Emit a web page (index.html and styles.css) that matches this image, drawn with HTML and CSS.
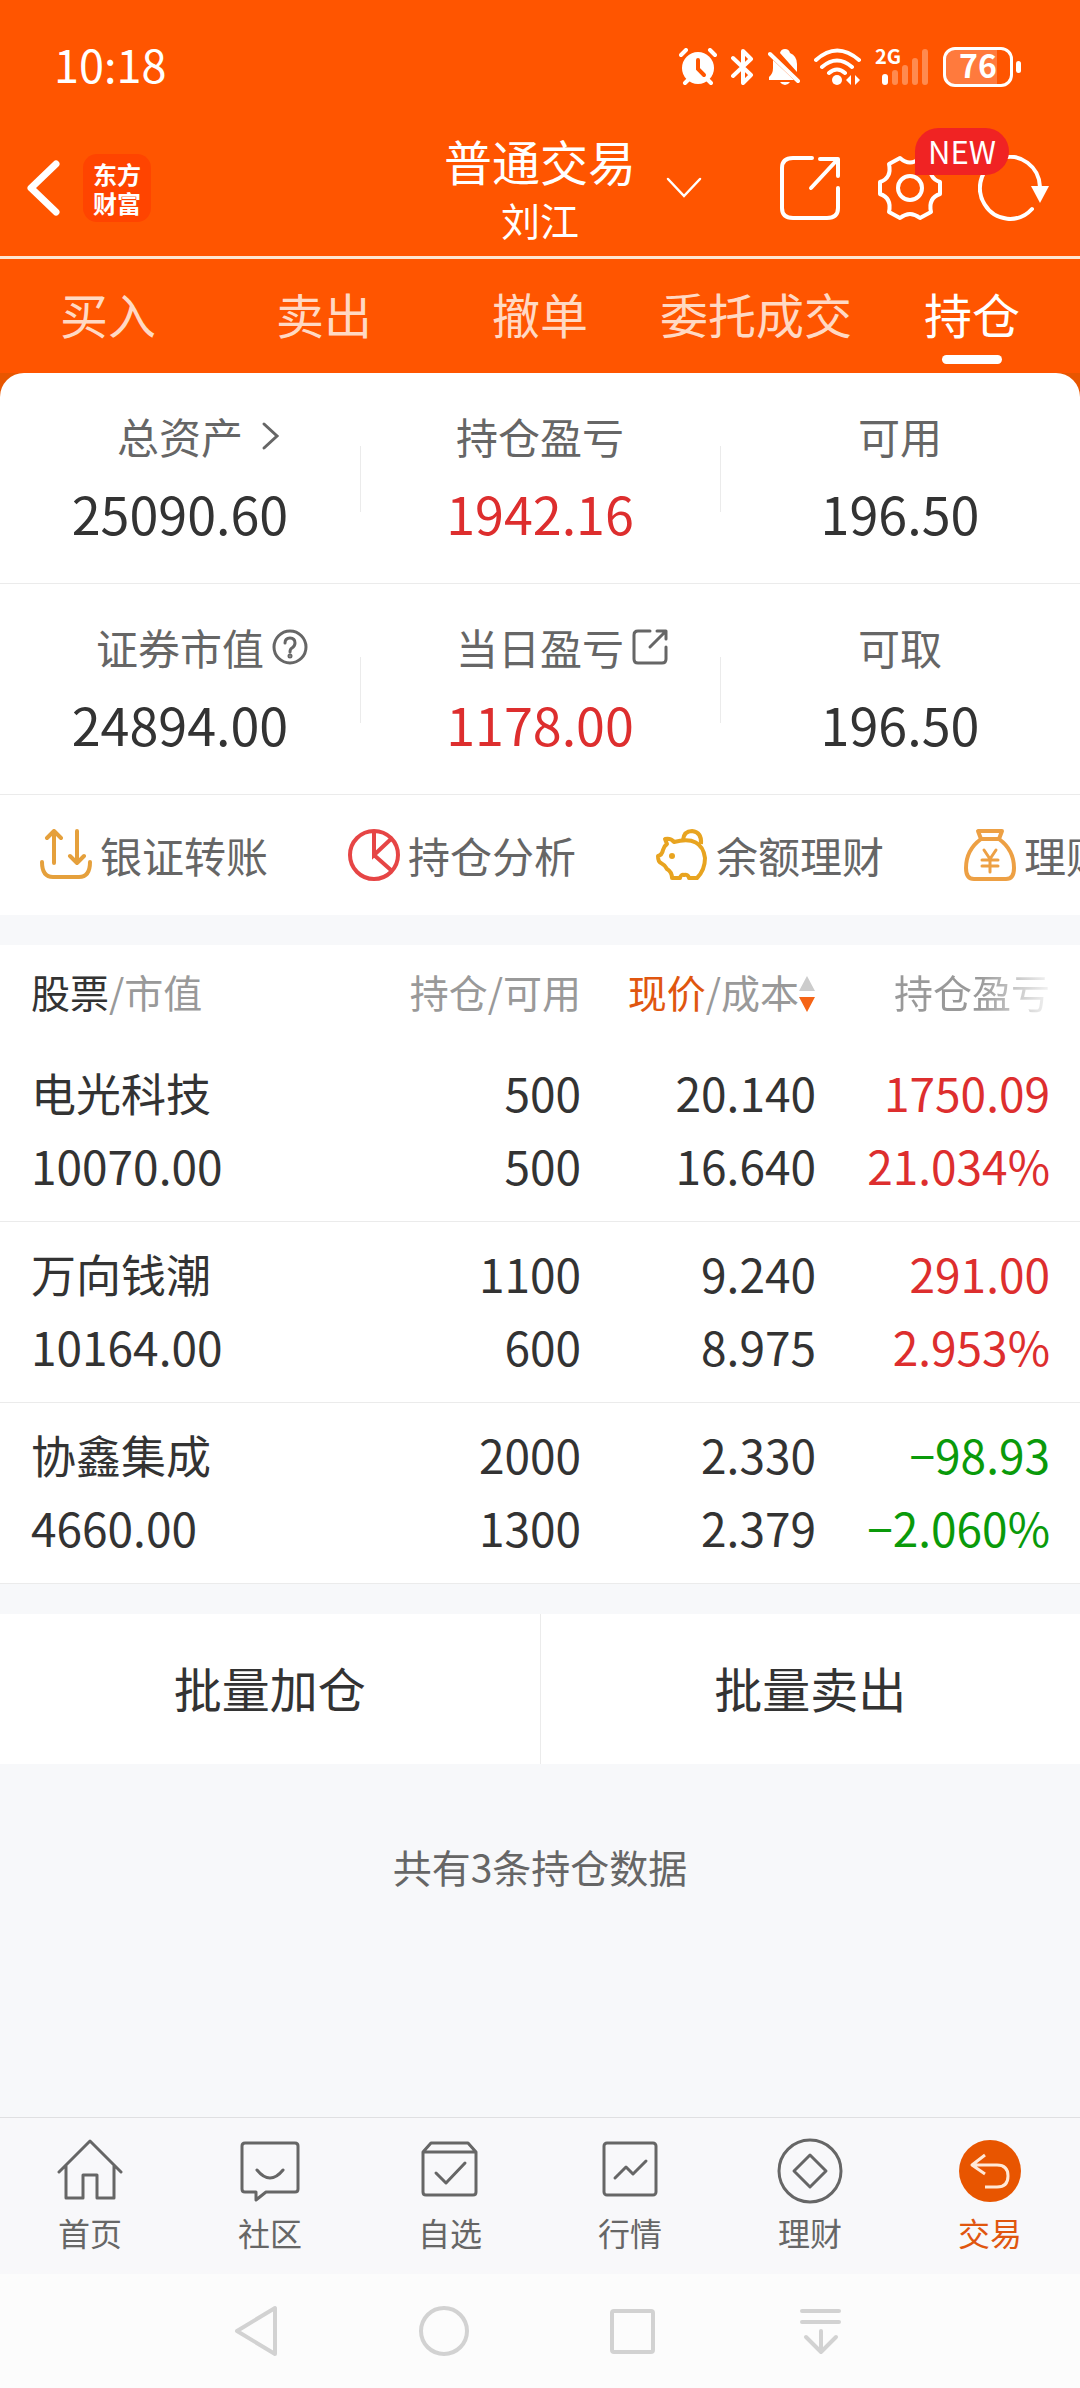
FILE: index.html
```html
<!DOCTYPE html>
<html lang="zh-CN">
<head>
  <meta charset="UTF-8">
  <meta name="viewport" content="width=device-width, initial-scale=1.0">
  <title>普通交易 - 持仓</title>
  <link rel="stylesheet" href="styles.css">
</head>
<body>
  <header class="top">
    <div class="status">
      <span class="time">10:18</span>
      <div class="status-icons">
        <svg width="38" height="38" viewBox="0 0 38 38" fill="none" stroke="#fff" stroke-width="4" stroke-linecap="round">
          <circle cx="19" cy="20" r="16" fill="#fff" stroke="none"/>
          <path d="M2 7l5-5M36 7l-5-5M6 35l4-4M32 35l-4-4"/>
          <path d="M19 12v9l6 6" stroke="#ff5500" stroke-width="4"/>
        </svg>
        <svg width="23" height="38" viewBox="0 0 23 38" fill="none" stroke="#fff" stroke-width="4" stroke-linejoin="round" stroke-linecap="round">
          <path d="M2 10l18 17-8 8V3l8 8L2 28"/>
        </svg>
        <svg width="32" height="38" viewBox="0 0 32 38" fill="#fff">
          <path d="M12 5q1-4 5-4t5 4q7 3 7 11v8zM5 12l21 20H1v-3q4-3 4-9zM12 34h10q-2 3-5 3t-5-3z"/>
          <path d="M2 6l28 27" stroke="#fff" stroke-width="4" stroke-linecap="round"/>
          <path d="M7 5l24 23" stroke="#ff5500" stroke-width="2"/>
        </svg>
        <svg width="47" height="38" viewBox="0 0 47 38" fill="none" stroke="#fff" stroke-width="4" stroke-linecap="round">
          <path d="M2 12q21-19 43 0M8 19q15-13 30 0M15 25q8-7 16 0"/>
          <circle cx="23" cy="32" r="5" fill="#fff" stroke="none"/>
          <path d="M37 27v10l-5-5zM41 27v10l5-5z" fill="#fff" stroke="none"/>
        </svg>
        <div class="signal">
          <span>2G</span>
          <svg width="54" height="38" viewBox="0 0 54 38" stroke-width="6" stroke-linecap="round">
            <path d="M10 29v5" stroke="#fff"/>
            <path d="M20 25v9M30 20v14M40 13v21M50 4v30" stroke="#ff8a4f"/>
          </svg>
        </div>
        <div class="battery"><span>76</span></div>
      </div>
    </div>

    <div class="bar">
      <div class="bar-left">
        <button class="icon-btn" aria-label="返回">
          <svg width="36" height="60" viewBox="0 0 36 60" fill="none" stroke="#fff" stroke-width="7" stroke-linecap="round" stroke-linejoin="round">
            <path d="M31 6L6 30l25 24"/>
          </svg>
        </button>
        <div class="logo">
          <span>东方</span>
          <span>财富</span>
        </div>
      </div>
      <div class="title">
        <h1>普通交易</h1>
        <p>刘江</p>
      </div>
      <div class="bar-right">
        <button class="icon-btn chevron" aria-label="切换账户">
          <svg width="36" height="22" viewBox="0 0 36 22" fill="none" stroke="#fff" stroke-width="2.5" stroke-linecap="round">
            <path d="M2 2l16 17L34 2"/>
          </svg>
        </button>
        <button class="icon-btn" aria-label="分享">
          <svg width="64" height="66" viewBox="0 0 64 66" fill="none" stroke="#fff" stroke-width="4" stroke-linecap="round" stroke-linejoin="round">
            <path d="M34 3H15Q4 3 4 13v40q0 10 11 10h34q11 0 11-10V33M42 4h18v17M59 5L33 33"/>
          </svg>
        </button>
        <button class="icon-btn" aria-label="设置">
          <svg width="64" height="66" viewBox="0 0 64 66" fill="none" stroke="#fff" stroke-width="4" stroke-linejoin="round">
            <path d="M22 3Q32 12 42 3L53 9Q50 23 62 27V39Q50 43 53 57L42 63Q32 55 22 63L11 57Q14 43 2 39V27Q14 23 11 9Z"/>
            <circle cx="32" cy="33" r="12"/>
          </svg>
          <span class="badge">NEW</span>
        </button>
        <button class="icon-btn" aria-label="刷新">
          <svg width="72" height="66" viewBox="0 0 72 66" fill="none" stroke="#fff" stroke-width="4" stroke-linecap="round">
            <path d="M54 54A30 31 0 1 1 62 32"/>
            <path d="M53 31h18l-9 17z" fill="#fff" stroke="none"/>
          </svg>
        </button>
      </div>
    </div>

    <nav class="tabs">
      <a href="#">买入</a>
      <a href="#">卖出</a>
      <a href="#">撤单</a>
      <a href="#">委托成交</a>
      <a href="#" class="active">持仓</a>
    </nav>
  </header>

  <main>
    <div class="panel-wrap">
    <section class="panel">
      <div class="summary">
        <div class="stat">
          <span class="label">总资产
            <svg class="hang" width="36" height="36" viewBox="0 0 36 36" fill="none" stroke="#666" stroke-width="3" stroke-linecap="round"><path d="M13 6l13 12-13 12"/></svg>
          </span>
          <span class="value">25090.60</span>
        </div>
        <div class="stat">
          <span class="label">持仓盈亏</span>
          <span class="value red">1942.16</span>
        </div>
        <div class="stat">
          <span class="label">可用</span>
          <span class="value">196.50</span>
        </div>
      </div>
      <div class="summary">
        <div class="stat">
          <span class="label">证券市值
            <svg class="hang" width="36" height="36" viewBox="0 0 36 36" fill="none" stroke="#666" stroke-width="3" stroke-linecap="round">
              <circle cx="18" cy="18" r="16"/><path d="M13 14q0-5 5-5t5 5q0 3-3 5-2 1-2 4"/><circle cx="18" cy="27" r="1"/>
            </svg>
          </span>
          <span class="value">24894.00</span>
        </div>
        <div class="stat">
          <span class="label">当日盈亏
            <svg class="hang" width="36" height="36" viewBox="0 0 36 36" fill="none" stroke="#666" stroke-width="3" stroke-linecap="round" stroke-linejoin="round">
              <path d="M18 2H6Q2 2 2 6v24q0 4 4 4h24q4 0 4-4V18M25 2h9v8M33 3L18 18"/>
            </svg>
          </span>
          <span class="value red">1178.00</span>
        </div>
        <div class="stat">
          <span class="label">可取</span>
          <span class="value">196.50</span>
        </div>
      </div>
      <div class="actions">
        <a href="#">
          <svg width="52" height="52" viewBox="0 0 52 52" fill="none" stroke="#e5a03c" stroke-width="4" stroke-linecap="round" stroke-linejoin="round">
            <path d="M14 34V3M7 9l7-7 7 7M37 2v32M30 27l7 7 7-7"/>
            <path d="M2 33q0 15 11 15h26q11 0 11-15"/>
          </svg>
          银证转账
        </a>
        <a href="#">
          <svg width="52" height="52" viewBox="0 0 52 52" fill="none" stroke="#e64545" stroke-width="4">
            <circle cx="26" cy="26" r="24"/><path d="M26 2v24l17-16M26 26l18 16"/>
          </svg>
          持仓分析
        </a>
        <a href="#">
          <svg width="52" height="52" viewBox="0 0 52 52" fill="none" stroke="#e8a420" stroke-width="4" stroke-linejoin="round">
            <path d="M9 10q6-1 9 3 28-7 31 16 0 12-8 20h-8q-1-4-5-3-3-1-4 3h-8q0-6-5-9-2-4-6-6-3-1-3-7 4-1 5-6 1-4 4-6z"/>
            <path d="M27 11q1-9 9-9 10 1 9 13"/><circle cx="16" cy="27" r="3" fill="#e8a420" stroke="none"/>
          </svg>
          余额理财
        </a>
        <a href="#">
          <svg width="52" height="52" viewBox="0 0 52 52" fill="none" stroke="#eda044" stroke-width="4" stroke-linecap="round" stroke-linejoin="round">
            <path d="M14 2h24l-3 8q15 11 15 29 0 11-8 11H10q-8 0-8-11 0-18 15-29zM17 10h18"/>
            <path d="M20 21l6 9 6-9M18 31h16M18 37h16M26 30v13" stroke-width="3"/>
          </svg>
          理财产品
        </a>
      </div>
    </section>
    </div>

    <table class="holdings">
      <thead>
        <tr>
          <th class="name"><b>股票</b>/市值</th>
          <th class="qty">持仓/可用</th>
          <th class="price"><em>现价</em>/成本<svg width="17" height="36" viewBox="0 0 17 36"><path d="M8 0l8 15H0z" fill="#ccc"/><path d="M8 36l8-15H0z" fill="#f56416"/></svg></th>
          <th class="profit"><span class="fade">持仓盈亏</span></th>
        </tr>
      </thead>
      <tbody>
        <tr>
          <td><span class="stock">电光科技</span>10070.00</td>
          <td>500<br>500</td>
          <td>20.140<br>16.640</td>
          <td class="red">1750.09<br>21.034%</td>
        </tr>
        <tr>
          <td><span class="stock">万向钱潮</span>10164.00</td>
          <td>1100<br>600</td>
          <td>9.240<br>8.975</td>
          <td class="red">291.00<br>2.953%</td>
        </tr>
        <tr>
          <td><span class="stock">协鑫集成</span>4660.00</td>
          <td>2000<br>1300</td>
          <td>2.330<br>2.379</td>
          <td class="green">−98.93<br>−2.060%</td>
        </tr>
      </tbody>
    </table>

    <div class="batch">
      <button>批量加仓</button>
      <button>批量卖出</button>
    </div>

    <p class="total">共有3条持仓数据</p>
  </main>

  <footer>
    <nav class="bottom-nav">
      <a href="#">
        <svg width="66" height="66" viewBox="0 0 66 66">
          <path d="M2 34L33 3l31 31M9 28v32h17V37h14v23h17V28"/>
        </svg>
        首页
      </a>
      <a href="#">
        <svg width="66" height="66" viewBox="0 0 66 66">
          <path d="M8 5h50q3 0 3 3v43q0 3-3 3H29l-10 8v-8H8q-3 0-3-3V8q0-3 3-3zM20 32q13 16 26 0"/>
        </svg>
        社区
      </a>
      <a href="#">
        <svg width="66" height="66" viewBox="0 0 66 66">
          <path d="M6 14l8-9h37l8 9v40q0 3-3 3H9q-3 0-3-3zM6 14h53M19 35l10 10 19-20"/>
        </svg>
        自选
      </a>
      <a href="#">
        <svg width="66" height="66" viewBox="0 0 66 66">
          <rect x="7" y="5" width="52" height="52" rx="3"/><path d="M18 40l11-11 7 7 13-13"/>
        </svg>
        行情
      </a>
      <a href="#">
        <svg width="66" height="66" viewBox="0 0 66 66">
          <circle cx="33" cy="33" r="31"/><path d="M33 17l16 16-16 16-16-16z"/>
        </svg>
        理财
      </a>
      <a href="#" class="active">
        <svg width="66" height="66" viewBox="0 0 66 66">
          <circle cx="33" cy="33" r="31" fill="#e85500" stroke="none"/>
          <path d="M28 17L15 27l13 9M16 27h24q11 0 11 11t-11 11H28" stroke="#ffe8d6" stroke-linecap="butt"/>
        </svg>
        交易
      </a>
    </nav>
    <div class="sys-nav">
      <button aria-label="返回"><svg width="54" height="54" viewBox="0 0 54 54"><path d="M44 4v46L6 27z"/></svg></button>
      <button aria-label="主页"><svg width="54" height="54" viewBox="0 0 54 54"><circle cx="25" cy="27" r="23"/></svg></button>
      <button aria-label="最近任务"><svg width="54" height="54" viewBox="0 0 54 54"><rect x="5" y="7" width="41" height="41" rx="2"/></svg></button>
      <button aria-label="收起"><svg width="54" height="54" viewBox="0 0 54 54"><path d="M7 7h37M7 18h37M26 27v21M11 33l15 15 15-15"/></svg></button>
    </div>
  </footer>
</body>
</html>
```

FILE: styles.css
```css
* {
    box-sizing: border-box;
}
body {
    margin: 0;
    min-height: 100vh;
    display: flex;
    flex-direction: column;
    font-family: "Noto Sans CJK SC", sans-serif;
    color: #333;
    background-color: #f7f8fa;
    overflow-x: hidden;
}
h1, p {
    margin: 0;
    font-weight: normal;
}
a {
    color: inherit;
    text-decoration: none;
}
button {
    font-family: inherit;
    color: inherit;
    border: none;
    padding: 0;
    background: none;
    cursor: pointer;
}
svg {
    display: block;
    flex-shrink: 0;
}

/* header */
.top {
    background-color: #ff5500;
    color: #fff;
}
.status {
    display: flex;
    justify-content: space-between;
    align-items: center;
    height: 120px;
    padding: 14px 59px 0 54px;
}
.time {
    font-size: 45px;
    line-height: 60px;
    padding-bottom: 6px;
}
.status-icons {
    display: flex;
    align-items: center;
    gap: 14px;
}
.signal {
    position: relative;
}
.signal span {
    position: absolute;
    left: 0;
    top: -4px;
    font-size: 20px;
    line-height: 24px;
    font-weight: bold;
}
.battery {
    position: relative;
    width: 70px;
    height: 40px;
    margin-right: 8px;
    border: 3px solid #fff;
    border-radius: 12px;
    background: linear-gradient(to right, #ff7a3d 80%, transparent 80%);
    font-size: 32px;
    line-height: 28px;
    font-weight: bold;
    text-align: center;
}
.battery::after {
    content: "";
    position: absolute;
    right: -11px;
    top: 11px;
    width: 5px;
    height: 12px;
    border-radius: 3px;
    background-color: #fff;
}
.bar {
    display: grid;
    grid-template-columns: 1fr auto 1fr;
    align-items: center;
    height: 139px;
    border-bottom: 3px solid #ffe6d0;
}
.bar-left {
    display: flex;
    align-items: center;
    gap: 22px;
    padding-left: 25px;
}
.logo {
    display: flex;
    flex-direction: column;
    align-items: center;
    justify-content: center;
    width: 68px;
    height: 68px;
    border-radius: 14px;
    background-color: #ff4400;
    font-size: 24px;
    line-height: 29px;
    font-weight: bold;
}
.title {
    text-align: center;
}
.title h1 {
    font-size: 48px;
    line-height: 62px;
}
.title p {
    font-size: 39px;
    line-height: 56px;
}
.bar-right {
    display: flex;
    align-items: center;
    gap: 36px;
    padding: 0 30px;
}
.icon-btn {
    position: relative;
}
.chevron {
    margin-right: auto;
}
.badge {
    position: absolute;
    left: 37px;
    top: -27px;
    z-index: 1;
    width: 94px;
    height: 47px;
    border-radius: 24px 24px 24px 0;
    background-color: #f02323;
    color: #fff;
    font-size: 31px;
    line-height: 46px;
    text-align: center;
}
.tabs {
    display: flex;
    height: 114px;
}
.tabs a {
    flex: 1;
    display: flex;
    flex-direction: column;
    align-items: center;
    font-size: 48px;
    line-height: 96px;
    padding-top: 6px;
    color: #ffd9c4;
    white-space: nowrap;
}
.tabs .active {
    color: #fff;
}
.tabs .active::after {
    content: "";
    width: 60px;
    height: 9px;
    margin-top: -6px;
    border-radius: 5px;
    background-color: #fff;
}

/* account summary */
.panel-wrap {
    background-color: #e85600;
}
.panel {
    border-radius: 24px 24px 0 0;
    background-color: #fff;
    overflow: hidden;
}
.summary {
    display: flex;
    height: 211px;
    border-bottom: 1px solid #ebebeb;
}
.stat {
    position: relative;
    flex: 1;
    display: flex;
    flex-direction: column;
    align-items: center;
    padding-top: 28px;
}
.stat + .stat::before {
    content: "";
    position: absolute;
    left: 0;
    top: 73px;
    width: 1px;
    height: 66px;
    background-color: #ebebeb;
}
.label {
    display: flex;
    align-items: center;
    gap: 8px;
    font-size: 42px;
    line-height: 70px;
    color: #666;
}
/* icon hangs past the centred label */
.hang {
    margin-right: -44px;
}
.value {
    font-size: 52px;
    line-height: 84px;
}
.red {
    color: #dd2e2e;
}
.green {
    color: #0a9a0a;
}
.actions {
    display: flex;
    align-items: center;
    gap: 80px;
    height: 120px;
    padding-left: 40px;
    overflow: hidden;
}
.actions a {
    flex-shrink: 0;
    display: flex;
    align-items: center;
    gap: 8px;
    font-size: 42px;
    line-height: 60px;
    color: #666;
}

/* holdings */
.holdings {
    width: 100%;
    margin: 30px 0;
    table-layout: fixed;
    border-collapse: collapse;
    background-color: #fff;
}
.holdings th {
    height: 96px;
    padding: 0 0 4px;
    font-size: 39px;
    line-height: 60px;
    font-weight: normal;
    text-align: right;
    color: #999;
    white-space: nowrap;
}
.holdings td {
    padding: 15px 0 19px;
    font-size: 46px;
    line-height: 73px;
    text-align: right;
    border-bottom: 1px solid #ebebeb;
}
.holdings th:first-child,
.holdings td:first-child {
    text-align: left;
    padding-left: 31px;
}
.holdings th:last-child,
.holdings td:last-child {
    padding-right: 30px;
}
.holdings b {
    font-weight: normal;
    color: #333;
}
.holdings em {
    font-style: normal;
    color: #e0560f;
}
.holdings th svg {
    display: inline-block;
    vertical-align: -4px;
}
.qty {
    width: 236px;
}
.price {
    width: 235px;
}
.profit {
    width: 264px;
}
.stock {
    display: block;
    font-size: 45px;
}
.fade {
    background: linear-gradient(to right, #999 55%, #f4f4f4);
    background-clip: text;
    color: transparent;
}

.batch {
    display: flex;
    background-color: #fff;
}
.batch button {
    flex: 1;
    height: 150px;
    padding-bottom: 5px;
    font-size: 48px;
}
.batch button + button {
    border-left: 1px solid #ebebeb;
}
.total {
    padding-top: 72px;
    font-size: 39px;
    line-height: 60px;
    text-align: center;
    color: #666;
}

/* bottom */
footer {
    margin-top: auto;
}
.bottom-nav {
    display: flex;
    height: 157px;
    border-top: 1px solid #e0e0e2;
    background-color: #f8f8fa;
}
.bottom-nav a {
    flex: 1;
    display: flex;
    flex-direction: column;
    align-items: center;
    padding-top: 20px;
    font-size: 32px;
    line-height: 56px;
    color: #666;
}
.bottom-nav svg {
    fill: none;
    stroke: #666;
    stroke-width: 3;
    stroke-linecap: round;
    stroke-linejoin: round;
}
.bottom-nav .active {
    color: #e0560f;
}
.sys-nav {
    display: flex;
    justify-content: center;
    height: 114px;
    background-color: #fcfcfc;
}
.sys-nav button {
    width: 188px;
}
.sys-nav svg {
    margin: 0 auto;
    fill: none;
    stroke: #d2d2d2;
    stroke-width: 4;
    stroke-linecap: round;
    stroke-linejoin: round;
}
```
